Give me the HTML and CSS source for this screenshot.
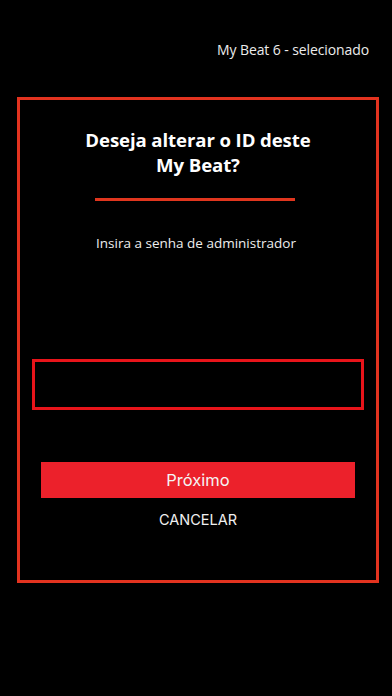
FILE: index.html
```html
<!DOCTYPE html>
<html lang="pt">
<head>
<meta charset="utf-8">
<title>My Beat</title>
<link rel="stylesheet" href="styles.css">
</head>
<body>
  <header class="topbar">
    <span class="selected">My Beat 6 - selecionado</span>
  </header>
  <main class="dialog">
    <h1 class="title">Deseja alterar o ID deste<br>My Beat?</h1>
    <div class="divider"></div>
    <p class="prompt">Insira a senha de administrador</p>
    <input class="password" type="password" aria-label="Senha de administrador">
    <button class="next" type="button">Próximo</button>
    <button class="cancel" type="button">CANCELAR</button>
  </main>
</body>
</html>
```

FILE: styles.css
```css
html, body {
  margin: 0;
  padding: 0;
  background: #000;
  height: 100%;
}

body {
  width: 392px;
  height: 696px;
  overflow: hidden;
  font-family: "Open Sans", "Noto Sans", sans-serif;
  color: #f2f2f2;
}

.topbar {
  display: flex;
  justify-content: flex-end;
  padding: 40px 23px 0 0;
  height: 20px;
}

.selected {
  font-size: 14px;
  line-height: 20px;
  color: #ececec;
  letter-spacing: -0.1px;
}

.dialog {
  margin: 37px 13px 0 17px;
  height: 480px;
  border: 3px solid #e3331f;
  display: flex;
  flex-direction: column;
  align-items: center;
}

.title {
  margin: 27px 0 0;
  font-size: 18.6px;
  line-height: 25px;
  font-weight: 700;
  text-align: center;
  color: #fff;
  letter-spacing: -0.1px;
}

.divider {
  margin-top: 21px;
  margin-right: 6px;
  width: 200px;
  height: 3px;
  background: #e0361e;
}

.prompt {
  margin: 32px 4px 0 0;
  font-size: 13.5px;
  line-height: 20px;
  color: #eee;
}

.password {
  box-sizing: border-box;
  margin-top: 106px;
  align-self: stretch;
  margin-left: 12px;
  margin-right: 12px;
  height: 51px;
  background: #000;
  border: 3px solid #e8141a;
  outline: none;
  padding: 0 8px;
  color: #fff;
}

.next {
  margin-top: 52px;
  align-self: stretch;
  margin-left: 21px;
  margin-right: 21px;
  height: 36px;
  border: none;
  background: #ec212b;
  color: #f4f4f4;
  font-family: Inter, Roboto, sans-serif;
  font-size: 16.5px;
  padding: 0;
}

.cancel {
  margin-top: 12px;
  height: 20px;
  border: none;
  background: none;
  color: #f0f0f0;
  font-family: Inter, Roboto, sans-serif;
  font-size: 14.5px;
  line-height: 20px;
  padding: 0;
}
```
